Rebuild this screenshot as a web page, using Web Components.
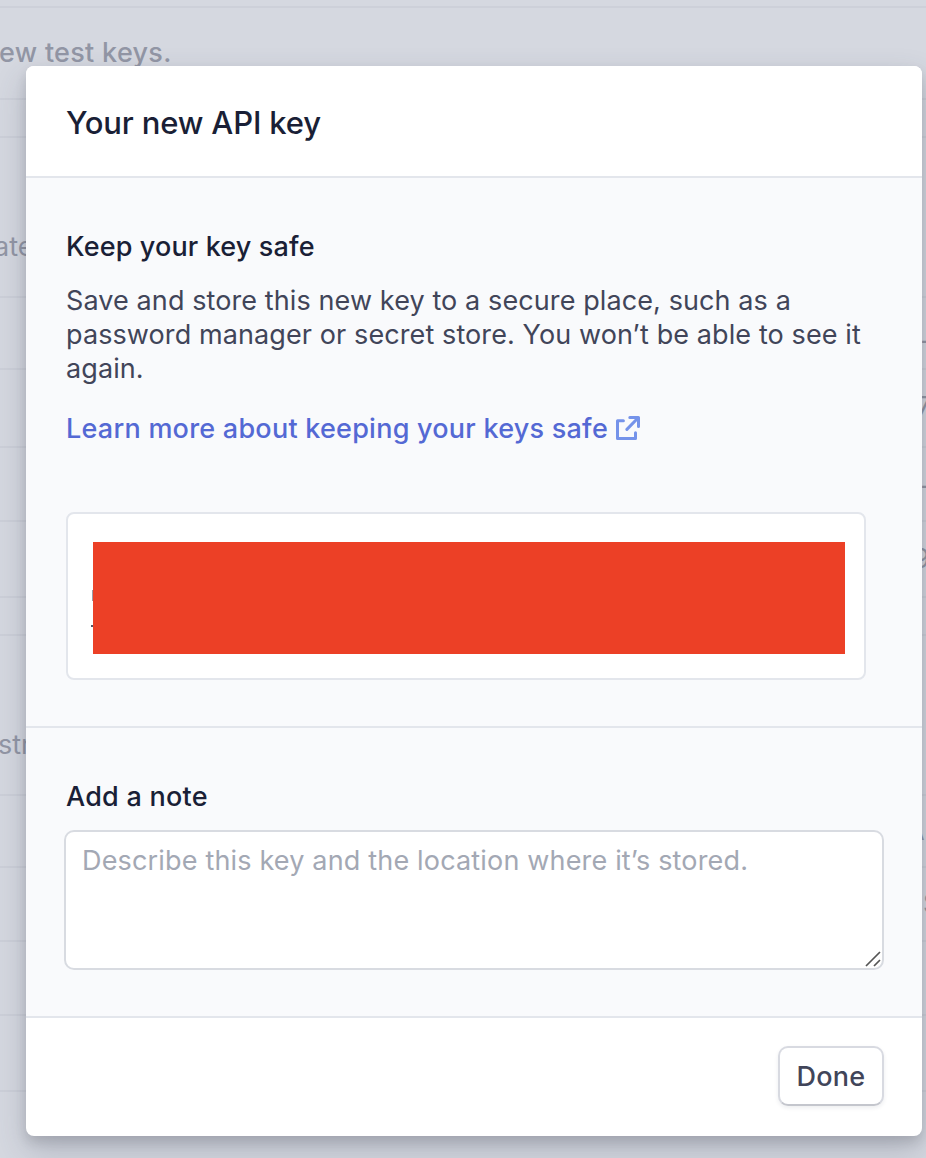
<!DOCTYPE html>
<html lang="en">
<head>
<meta charset="utf-8">
<title>Your new API key</title>
<style>
html,body{margin:0;height:100%;overflow:hidden}
body{font-family:Inter,"Liberation Sans",sans-serif;font-size:27px;background:#d5d8e0}
</style>
</head>
<body>
<keys-page></keys-page>
<script>
const define = (name, html) => {
  const t = document.createElement('template');
  t.innerHTML = html;
  customElements.define(name, class extends HTMLElement {
    constructor() {
      super();
      this.attachShadow({mode: 'open'}).append(t.content.cloneNode(true));
    }
  });
};

define('table-row', `
<style>
:host{display:flex;justify-content:space-between;align-items:center;box-sizing:border-box;border-bottom:2px solid #cdd0d9;color:#9296a5;white-space:nowrap;overflow:hidden;line-height:34px}
.end{width:4px;overflow:hidden;flex:none}
.end ::slotted(*){display:block}
</style>
<span><slot></slot></span><span class="end"><slot name="end"></slot></span>`);

define('key-table', `
<style>
:host{display:grid;grid-template-rows:8px 92px 38px 160px 72px 78px 74px 76px 38px 160px 72px 74px 74px 76px 66px;height:1158px;background:#d5d8e0}
.new{position:relative;left:-1px;font-weight:500;letter-spacing:.3px}
.date{position:relative;left:-6px;top:30px}
.rest{position:relative;left:-2px;top:30px}
</style>
<table-row></table-row>
<table-row><span class="new">ew test keys.</span></table-row>
<table-row></table-row>
<table-row><span class="date">ate</span></table-row>
<table-row><span slot="end" style="padding-top:16px">—</span></table-row>
<table-row><span slot="end" style="text-indent:-6px;margin-top:-3px">7</span></table-row>
<table-row><span slot="end" style="padding-top:3px">—</span></table-row>
<table-row><span slot="end" style="text-indent:-9px">9</span></table-row>
<table-row></table-row>
<table-row><span class="rest">str</span></table-row>
<table-row><span slot="end" style="text-indent:-16px">A</span></table-row>
<table-row><span slot="end" style="text-indent:1px">S</span></table-row>
<table-row></table-row>
<table-row></table-row>
<table-row style="border:0"></table-row>`);

define('dialog-section', `
<style>
:host{display:block;box-sizing:border-box;background:#f9fafc;border-bottom:2px solid #e3e6ec}
</style><slot></slot>`);

define('external-icon', `
<style>:host{display:block;width:24px;height:24px}svg{display:block}</style>
<svg width="24" height="24" viewBox="0 0 24 24" fill="none" stroke="#7593ea" stroke-width="3" stroke-linejoin="round" stroke-linecap="round"><path d="M7.4 4.8H1.5V22.5H19.5V16.8"/><path d="M13.8 1.5H22.5V10.4M22.2 1.8L10.9 13.4"/></svg>`);

define('secret-key', `
<style>
:host{display:block;box-sizing:border-box;width:800px;height:168px;border:2px solid #e3e6ec;border-radius:8px;background:#fff;padding:28px 18px 24px 22px}
.value{display:grid;grid-template-columns:3px 752px;height:112px}
.edge{display:block;padding-top:48px}
.edge i{display:block;width:1px;height:11px;margin-left:2px;background:#9a9da8}
.edge i+i{width:2px;height:2px;margin:24px 0 0 1px;background:#545969}
.mask{background:#ec4026}
</style>
<div class="value"><span class="edge"><i></i><i></i></span><div class="mask"></div></div>`);

define('note-field', `
<style>
:host{display:block;position:relative;width:820px;height:140px}
textarea{display:block;box-sizing:border-box;width:100%;height:100%;margin:0;border:2px solid #d8dbe1;border-radius:10px;background:#fff;padding:12px 16px;font:inherit;line-height:34px;letter-spacing:.17px;color:#414552;resize:none;outline:0;overflow:hidden}
textarea::placeholder{color:#a3a8b4;opacity:1}
svg{position:absolute;right:3px;bottom:3px}
</style>
<textarea placeholder="Describe this key and the location where it’s stored."></textarea>
<svg width="16" height="16" viewBox="0 0 16 16" fill="none" stroke="#555" stroke-width="1.7"><path d="M1 15L15 1M9 15L15 9"/></svg>`);

define('push-button', `
<style>
:host{display:block}
button{display:block;box-sizing:border-box;width:106px;height:60px;margin:0;padding:0;border:2px solid #d8dae1;border-bottom-color:#c4c6cd;border-radius:10px;background:#fff;color:#414559;font:inherit;font-weight:500;letter-spacing:.3px;box-shadow:0 2px 4px rgba(30,35,60,.08)}
</style>
<button><slot></slot></button>`);

define('key-dialog', `
<style>
:host{display:grid;grid-template-columns:896px;grid-template-rows:112px 550px 290px 118px;width:896px;height:1070px;border-radius:8px;overflow:hidden;background:#fff;color:#1a1f36}
.head{background:#fff;padding:38px 40px 0}
.body{padding:52px 40px 0}
.note{padding:52px 38px 0}
h1,h2,p{margin:0;white-space:nowrap}
h1{font-size:31px;line-height:38px;font-weight:500;letter-spacing:-.16px}
h2{font-size:27px;line-height:34px;font-weight:550;letter-spacing:.14px}
p{margin-top:20px;line-height:34px;letter-spacing:.1px;color:#414559}
p span{display:block}
a{display:flex;width:max-content;align-items:center;gap:8px;margin-top:26px;line-height:34px;font-weight:500;letter-spacing:.24px;color:#5469d4;white-space:nowrap}
external-icon{margin-top:-2px}
secret-key{margin-top:66px}
.note h2{margin-left:2px;letter-spacing:.25px}
note-field{margin-top:16px}
footer{display:flex;justify-content:flex-end;padding:28px 38px}
</style>
<dialog-section class="head"><h1>Your new API key</h1></dialog-section>
<dialog-section class="body">
<h2>Keep your key safe</h2>
<p><span>Save and store this new key to a secure place, such as a</span><span>password manager or secret store. You won’t be able to see it</span><span>again.</span></p>
<a>Learn more about keeping your keys safe<external-icon></external-icon></a>
<secret-key></secret-key>
</dialog-section>
<dialog-section class="note"><h2>Add a note</h2><note-field></note-field></dialog-section>
<footer><push-button>Done</push-button></footer>`);

define('keys-page', `
<style>
:host{display:block;position:relative;width:926px;height:1158px;overflow:hidden}
key-dialog{position:absolute;left:26px;top:66px;box-shadow:0 14px 32px rgba(60,66,87,.24),0 6px 12px rgba(0,0,0,.12)}
</style>
<key-table></key-table><key-dialog></key-dialog>`);
</script>
</body>
</html>
